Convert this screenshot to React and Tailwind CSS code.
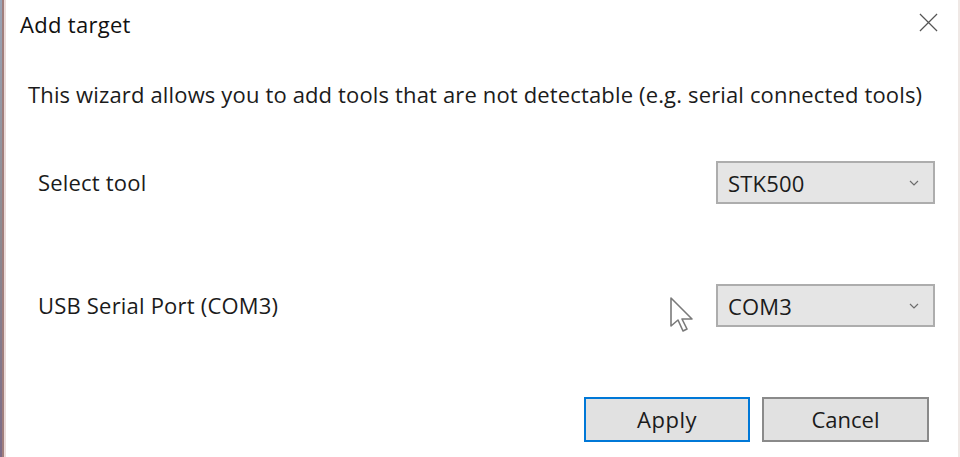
import React from 'react';

const font = { fontFamily: '"Open Sans", "Noto Sans", sans-serif' };

function Chevron() {
  return (
    <svg width="10" height="6" viewBox="0 0 10 6" className="text-[#6d6d6d]">
      <path d="M1 1 L5 5 L9 1" fill="none" stroke="currentColor" strokeWidth="1.2" />
    </svg>
  );
}

function Select({ value }) {
  return (
    <div className="w-[219px] h-[43px] bg-[#e5e5e5] border-2 border-[#adadad] flex items-center justify-between pl-[10px] pr-[14px] text-[22px] leading-none text-[#1b1b1b]">
      <span>{value}</span>
      <Chevron />
    </div>
  );
}

function Cursor() {
  return (
    <svg width="28" height="40" viewBox="0 0 28 40" className="absolute left-[668px] top-[296px]">
      <path
        d="M3 2 L3 30 L10 24 L15 35 L19 33 L14 23 L24 23 Z"
        fill="white"
        stroke="#7a7a7a"
        strokeWidth="1.6"
        strokeLinejoin="round"
      />
    </svg>
  );
}

export default function App() {
  return (
    <div className="w-[960px] h-[457px] flex bg-white relative overflow-hidden" style={font}>
      {/* background window peeking at left */}
      <div className="w-[2px] h-full bg-gradient-to-b from-[#9aa3b5] via-[#8e8a90] to-[#7c6a86]" />
      <div className="w-[2px] h-full bg-[#a07e7c]" />
      <div className="w-[2px] h-full bg-[#eadbd9]" />

      <div className="flex-1 flex flex-col">
        {/* title bar */}
        <div className="h-[52px] flex items-start justify-between pl-[14px] pr-[20px] pt-[9px]">
          <span className="text-[22px] leading-[30px] text-[#111] tracking-[0.3px]">Add target</span>
          <svg width="19" height="19" viewBox="0 0 20 20" className="mt-[4px] text-[#555]">
            <path d="M1 1 L19 19 M19 1 L1 19" stroke="currentColor" strokeWidth="1.3" />
          </svg>
        </div>

        <div className="pl-[22px] pt-[27px] text-[22px] leading-[30px] text-[#1b1b1b] tracking-[0.15px]">
          This wizard allows you to add tools that are not detectable (e.g. serial connected tools)
        </div>

        <div className="mt-[52px] flex items-center justify-between pl-[32px] pr-[23px] text-[22px] text-[#1b1b1b] tracking-[0.2px]">
          <span>Select tool</span>
          <Select value="STK500" />
        </div>

        <div className="mt-[80px] flex items-center justify-between pl-[32px] pr-[23px] text-[22px] text-[#1b1b1b] tracking-[0.2px]">
          <span>USB Serial Port (COM3)</span>
          <Select value="COM3" />
        </div>

        <div className="mt-[70px] flex justify-end gap-[12px] pr-[29px]">
          <button className="w-[166px] h-[45px] bg-[#e1e1e1] border-2 border-[#0078d7] text-[22px] tracking-[0.5px] text-[#1b1b1b]">
            Apply
          </button>
          <button className="w-[167px] h-[45px] bg-[#e1e1e1] border-2 border-[#8a8a8a] text-[22px] text-[#1b1b1b]">
            Cancel
          </button>
        </div>
      </div>

      <div className="w-[2px] h-full bg-[#efe8e5]" />
      <Cursor />
    </div>
  );
}
